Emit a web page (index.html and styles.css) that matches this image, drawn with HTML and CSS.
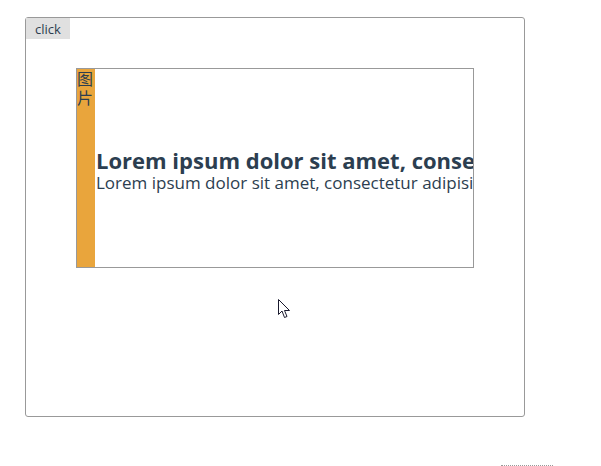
FILE: index.html
```html
<!DOCTYPE html>
<html>
<head>
<meta charset="utf-8">
<link rel="stylesheet" href="styles.css">
</head>
<body>
<div class="page">
  <div class="frame">
    <button class="btn">click</button>
    <div class="card">
      <div class="pic">图片</div>
      <div class="body">
        <div class="title">Lorem ipsum dolor sit amet, consectetur adipisicing elit</div>
        <div class="sub">Lorem ipsum dolor sit amet, consectetur adipisicing elit, sed do eiusmod</div>
      </div>
    </div>
    <svg class="cursor" width="13" height="20" viewBox="0 0 13 20"><path d="M0.5 0.5 L0.5 15.5 L4 12 L6.5 18.5 L9 17.5 L6.5 11.5 L11.5 11.5 Z" fill="#fff" stroke="#1a1a2e" stroke-width="1"/></svg>
  </div>
  <div class="foot"><div class="dots"></div></div>
</div>
</body>
</html>
```
FILE: styles.css
```css
html, body {
  margin: 0;
  padding: 0;
  background: #fff;
}
.page {
  padding: 17px 0 0 25px;
  font-family: "Open Sans", "Noto Sans CJK SC", sans-serif;
  color: #2c3e50;
}
.frame {
  position: relative;
  box-sizing: border-box;
  width: 500px;
  height: 400px;
  border: 1px solid #999;
  border-radius: 3px;
  padding: 50px 0 0 50px;
}
.btn {
  position: absolute;
  left: 0;
  top: 0;
  width: 44px;
  height: 21px;
  margin: 0;
  padding: 0;
  border: none;
  background: #e0e0e0;
  font-family: "Open Sans", sans-serif;
  font-size: 13px;
  color: #2c3e50;
}
.card {
  box-sizing: border-box;
  width: 398px;
  height: 200px;
  border: 1px solid #999;
  display: flex;
  overflow: hidden;
}
.pic {
  flex: none;
  width: 18px;
  background: #e9a53c;
  font-family: "Noto Sans CJK SC", sans-serif;
  font-size: 16px;
  line-height: 19px;
  color: #2c3e50;
}
.body {
  flex: 1;
  min-width: 0;
  display: flex;
  flex-direction: column;
  justify-content: center;
  white-space: nowrap;
  overflow: hidden;
  padding: 2px 0 0 1px;
}
.title {
  font-size: 22px;
  font-weight: 700;
  line-height: 26px;
}
.sub {
  font-size: 17px;
  line-height: 19px;
}
.cursor {
  position: absolute;
  left: 252px;
  top: 281px;
}
.foot {
  display: flex;
  padding: 48px 0 0 476px;
}
.dots {
  width: 52px;
  border-top: 1px dotted #999;
}
```
